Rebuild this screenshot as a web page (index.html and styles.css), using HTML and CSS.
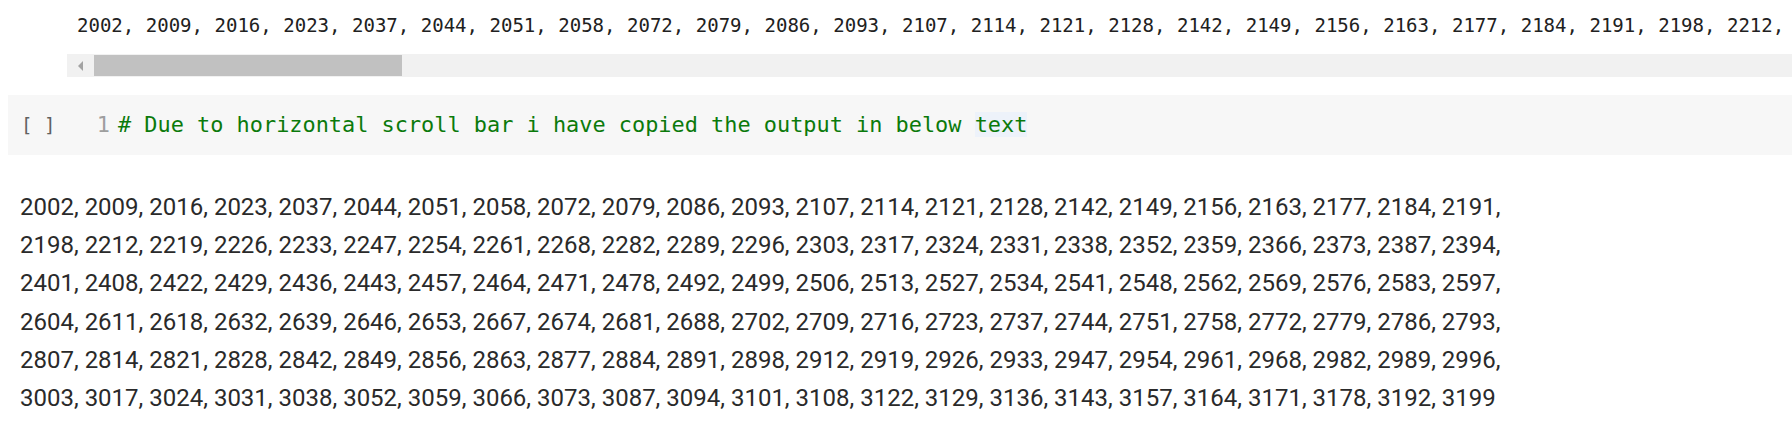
FILE: index.html
```html
<!DOCTYPE html>
<html>
<head>
<meta charset="utf-8">
<link rel="stylesheet" href="styles.css">
</head>
<body>
<div class="output">
  <div class="output-line">2002, 2009, 2016, 2023, 2037, 2044, 2051, 2058, 2072, 2079, 2086, 2093, 2107, 2114, 2121, 2128, 2142, 2149, 2156, 2163, 2177, 2184, 2191, 2198, 2212, 2219, 2226, 2233, 2247, 2254</div>
  <div class="hscroll">
    <div class="arrow"><svg width="6" height="10" viewBox="0 0 6 10"><path d="M5 0 L0 5 L5 10 Z" fill="#a3a3a3"/></svg></div>
    <div class="thumb"></div>
  </div>
</div>
<div class="cell">
  <div class="run">[ ]</div>
  <div class="lineno">1</div>
  <div class="code"><span class="comment"># Due to horizontal scroll bar i have copied the output in below <span class="match">text</span></span></div>
</div>
<div class="text">
  <div class="tline">2002, 2009, 2016, 2023, 2037, 2044, 2051, 2058, 2072, 2079, 2086, 2093, 2107, 2114, 2121, 2128, 2142, 2149, 2156, 2163, 2177, 2184, 2191,</div>
  <div class="tline">2198, 2212, 2219, 2226, 2233, 2247, 2254, 2261, 2268, 2282, 2289, 2296, 2303, 2317, 2324, 2331, 2338, 2352, 2359, 2366, 2373, 2387, 2394,</div>
  <div class="tline">2401, 2408, 2422, 2429, 2436, 2443, 2457, 2464, 2471, 2478, 2492, 2499, 2506, 2513, 2527, 2534, 2541, 2548, 2562, 2569, 2576, 2583, 2597,</div>
  <div class="tline">2604, 2611, 2618, 2632, 2639, 2646, 2653, 2667, 2674, 2681, 2688, 2702, 2709, 2716, 2723, 2737, 2744, 2751, 2758, 2772, 2779, 2786, 2793,</div>
  <div class="tline">2807, 2814, 2821, 2828, 2842, 2849, 2856, 2863, 2877, 2884, 2891, 2898, 2912, 2919, 2926, 2933, 2947, 2954, 2961, 2968, 2982, 2989, 2996,</div>
  <div class="tline">3003, 3017, 3024, 3031, 3038, 3052, 3059, 3066, 3073, 3087, 3094, 3101, 3108, 3122, 3129, 3136, 3143, 3157, 3164, 3171, 3178, 3192, 3199</div>
</div>
</body>
</html>
```

FILE: styles.css
```css
html, body {
  margin: 0;
  padding: 0;
  background: #ffffff;
  overflow: hidden;
}

.output {
  padding-top: 13px;
  margin-left: 67px;
}

.output-line {
  font-family: "DejaVu Sans Mono", monospace;
  font-size: 19.05px;
  line-height: 24px;
  color: #212121;
  white-space: pre;
  padding-left: 10px;
  overflow: hidden;
}

.hscroll {
  margin-top: 17px;
  height: 23px;
  background: #f1f1f1;
  display: flex;
  align-items: center;
}

.arrow {
  width: 27px;
  display: flex;
  justify-content: center;
  align-items: center;
}

.thumb {
  width: 308px;
  height: 21px;
  background: #c1c1c1;
}

.cell {
  margin-top: 18px;
  margin-left: 8px;
  height: 60px;
  background: #f7f7f7;
  display: flex;
  align-items: center;
  font-family: "DejaVu Sans Mono", monospace;
  font-size: 21.9px;
  line-height: 30px;
}

.run {
  width: 80px;
  padding-left: 13px;
  box-sizing: border-box;
  color: #616161;
  font-size: 19px;
  white-space: pre;
}

.lineno {
  width: 30px;
  padding-right: 8px;
  box-sizing: border-box;
  text-align: right;
  color: #9e9e9e;
}

.code {
  white-space: pre;
}

.comment {
  color: #0b7a0b;
}

.match {
  background: #edf2fa;
}

.text {
  margin-top: 33px;
  padding-left: 20px;
  font-family: Roboto, "Liberation Sans", sans-serif;
  font-size: 24px;
  line-height: 38.2px;
  color: #2a2a2a;
}

.tline {
  white-space: pre;
}
```
